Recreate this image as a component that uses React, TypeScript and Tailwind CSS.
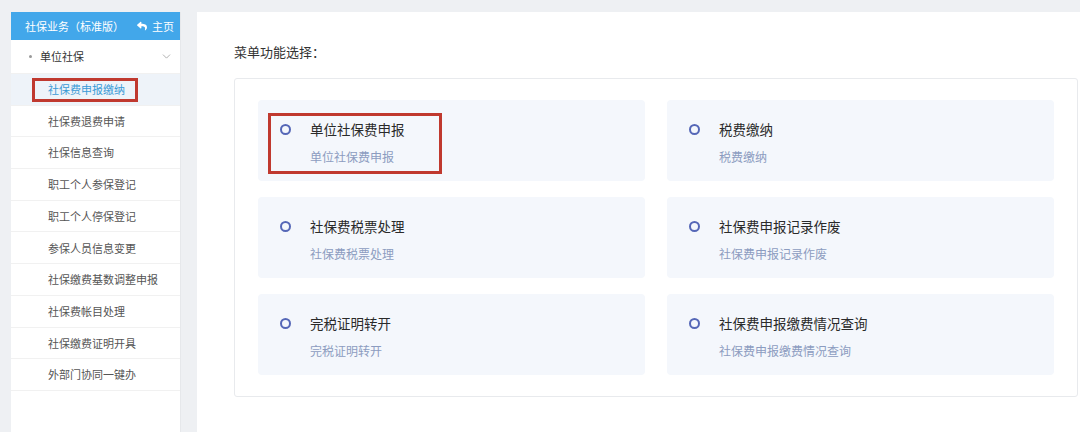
import { ChevronDown } from "lucide-react";
import { FaReply } from "react-icons/fa";

const SUB_MENU = [
	"社保费申报缴纳",
	"社保费退费申请",
	"社保信息查询",
	"职工个人参保登记",
	"职工个人停保登记",
	"参保人员信息变更",
	"社保缴费基数调整申报",
	"社保费帐目处理",
	"社保缴费证明开具",
	"外部门协同一键办",
];

const FUNCTIONS = [
	"单位社保费申报",
	"税费缴纳",
	"社保费税票处理",
	"社保费申报记录作废",
	"完税证明转开",
	"社保费申报缴费情况查询",
];

export default function App() {
	return (
		<div
			className="h-[432px] w-[1080px] overflow-hidden bg-[#eef0f3] flex pt-3 pl-[11px]"
			style={{ fontFamily: '"Noto Sans CJK SC", "Noto Sans", sans-serif' }}
		>
			{/* Sidebar */}
			<aside className="w-[170px] shrink-0 bg-white flex flex-col border-r border-[#e6e8eb]">
				<div className="h-[28px] bg-[#42a7ea] flex items-center justify-between pl-[14px] pr-[6px] text-white text-[11px]">
					<span>社保业务（标准版）</span>
					<span className="flex items-center gap-[5px]">
						<FaReply size={10} />
						主页
					</span>
				</div>

				<div className="h-[34px] flex items-center justify-between pl-[18px] pr-[7px] border-b border-[#f1f1f1]">
					<div className="flex items-center gap-[8px] text-[11px] text-[#333]">
						<span className="w-[3px] h-[3px] rounded-full bg-[#999]"></span>
						单位社保
					</div>
					<ChevronDown size={13} strokeWidth={1.4} className="text-[#999]" />
				</div>

				<ul className="flex flex-col">
					{SUB_MENU.map((label, i) => (
						<li
							key={label}
							className={
								i === 0
									? "relative h-[31.7px] flex items-center pl-[37px] text-[11px] text-[#3a9ad6] bg-[#eef3f9] border-b border-[#f1f1f1]"
									: "h-[31.7px] flex items-center pl-[37px] text-[11px] text-[#555] border-b border-[#f1f1f1]"
							}
						>
							{label}
							{i === 0 && (
								<span className="absolute left-[21px] top-[4px] w-[106px] h-[24px] border-[3px] border-[#c0392f] pointer-events-none"></span>
							)}
						</li>
					))}
				</ul>
			</aside>

			{/* Main */}
			<main className="ml-4 flex-1 bg-white pl-[37px] pr-[2px] pt-[31px]">
				<h2 className="text-[13px] leading-[18px] text-[#333]">菜单功能选择：</h2>

				<div className="mt-[17px] border border-[#e8eaed] rounded-[3px] px-[23px] pt-[21px] pb-[21px] grid grid-cols-2 gap-x-[22px] gap-y-[16px]">
					{FUNCTIONS.map((name, i) => (
						<div key={name} className="relative h-[81px] bg-[#f4f7fc] rounded-[4px] flex pl-[22px] pt-[20px]">
							<span className="mt-[4px] w-[11px] h-[11px] rounded-full border-2 border-[#5567b7] shrink-0"></span>
							<div className="ml-[19px] flex flex-col">
								<span className="text-[13.5px] leading-[19px] text-[#2a2a2a]">{name}</span>
								<span className="mt-[9px] text-[12px] leading-[17px] text-[#8c9cc0]">{name}</span>
							</div>
							{i === 0 && (
								<span className="absolute left-[10px] top-[13px] w-[174px] h-[61px] border-[3px] border-[#c0392f] pointer-events-none"></span>
							)}
						</div>
					))}
				</div>
			</main>
		</div>
	);
}
